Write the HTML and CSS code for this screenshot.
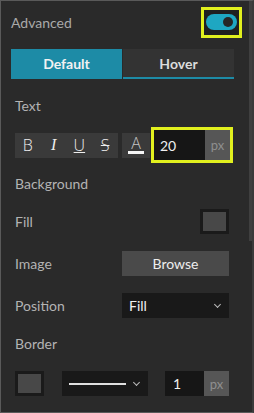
FILE: index.html
```html
<!DOCTYPE html>
<html lang="en">
<head>
    <meta charset="UTF-8">
    <meta name="viewport" content="width=device-width, initial-scale=1.0">
    <title>Advanced Style</title>
    <link rel="stylesheet" href="styles.css">
</head>
<body>
    <div class="panel">
        <div class="scroll-thumb"></div>

        <div class="header">
            <span class="header-title">Advanced</span>
            <div class="highlight toggle-box">
                <div class="toggle"><span class="knob"></span></div>
            </div>
        </div>

        <div class="tabs">
            <button class="tab active">Default</button>
            <button class="tab">Hover</button>
        </div>

        <div class="section">
            <div class="label">Text</div>
            <div class="text-row">
                <div class="format-group">
                    <span class="fmt fmt-b">B</span>
                    <span class="fmt fmt-i">I</span>
                    <span class="fmt fmt-u">U</span>
                    <span class="fmt fmt-s">S</span>
                </div>
                <div class="color-btn"><span class="color-a">A</span><span class="color-bar"></span></div>
                <div class="highlight size-box">
                    <span class="num-input">20</span>
                    <span class="unit">px</span>
                </div>
            </div>

            <div class="label label-bg">Background</div>
            <div class="row">
                <span class="row-label">Fill</span>
                <div class="swatch"><span></span></div>
            </div>
            <div class="row">
                <span class="row-label">Image</span>
                <div class="browse">Browse</div>
            </div>
            <div class="row">
                <span class="row-label">Position</span>
                <div class="select">Fill<span class="chevron"></span></div>
            </div>

            <div class="label label-border">Border</div>
            <div class="border-row">
                <div class="swatch"><span></span></div>
                <div class="line-select"><span class="line"></span><span class="chevron"></span></div>
                <div class="border-size">
                    <span class="num-input">1</span>
                    <span class="unit">px</span>
                </div>
            </div>
        </div>
    </div>
</body>
</html>
```

FILE: styles.css
```css
* {
    box-sizing: border-box;
    margin: 0;
    padding: 0;
}

body {
    background: #2a2a2a;
    font-family: 'Lato', 'Open Sans', sans-serif;
    font-size: 14px;
    color: #b3b3b3;
}

.panel {
    position: relative;
    width: 254px;
    height: 413px;
    border: 1px solid #5a5a5a;
    border-right: 2px solid #3a3a3a;
    background: #2a2a2a;
    overflow: hidden;
    padding-top: 5px;
}

.scroll-thumb {
    position: absolute;
    right: 0;
    top: 0;
    width: 3px;
    height: 240px;
    background: #3f3f3f;
}

.header {
    display: flex;
    align-items: center;
    justify-content: space-between;
    height: 32px;
    padding-left: 10px;
    padding-right: 10px;
}

.header-title {
    font-size: 14px;
    color: #a9a9a9;
}

.highlight {
    border: 3px solid #e1f01e;
}

.toggle-box {
    width: 41px;
    height: 31px;
    display: flex;
    align-items: center;
    justify-content: center;
    background: #202020;
}

.toggle {
    position: relative;
    width: 31px;
    height: 16px;
    border-radius: 8px;
    background: #1ea7c2;
}

.knob {
    position: absolute;
    right: 4px;
    top: 3px;
    width: 10px;
    height: 10px;
    border-radius: 50%;
    background: #262626;
}

.tabs {
    display: flex;
    margin: 11px 18px 0 10px;
    height: 30px;
}

.tab {
    flex: 1;
    border: none;
    font-family: inherit;
    font-size: 14px;
    font-weight: 700;
    background: #333;
    color: #dcdcdc;
    border-bottom: 2px solid #1d8ba6;
}

.tab.active {
    background: #1d8ba6;
    color: #f2f2f2;
    margin-right: 1px;
}

.section {
    padding: 0 23px 0 14px;
}

.label {
    margin-top: 19px;
    height: 16px;
    line-height: 16px;
}

.text-row {
    display: flex;
    align-items: center;
    margin-top: 13px;
    height: 36px;
}

.text-row > div {
    flex-shrink: 0;
}

.format-group {
    display: flex;
    width: 103px;
    height: 25px;
    background: #3a3a3a;
}

.fmt {
    flex: 1;
    display: flex;
    align-items: center;
    justify-content: center;
    font-family: 'Open Sans', sans-serif;
    font-weight: 300;
    font-size: 16px;
    color: #ededed;
}

.fmt-i {
    font-family: 'Liberation Serif', serif;
    font-weight: 400;
    font-style: italic;
    font-size: 16px;
}

.fmt-u {
    text-decoration: underline;
    text-decoration-thickness: 1px;
    text-underline-offset: 1px;
}

.fmt-s {
    text-decoration: line-through;
    text-decoration-thickness: 1px;
}

.color-btn {
    display: flex;
    flex-direction: column;
    align-items: center;
    justify-content: center;
    width: 28px;
    height: 25px;
    margin-left: 4px;
    background: #3a3a3a;
}

.color-a {
    font-family: 'Open Sans', sans-serif;
    font-weight: 300;
    font-size: 16px;
    line-height: 14px;
    color: #c4c4c4;
}

.color-bar {
    width: 16px;
    height: 3px;
    margin-top: 1px;
    background: #f5f5f5;
}

.size-box {
    display: flex;
    width: 82px;
    height: 36px;
    margin-left: 1px;
}

.num-input {
    flex: 1;
    display: flex;
    align-items: center;
    padding-left: 6px;
    background: #161616;
    color: #f0f0f0;
    font-size: 14px;
}

.unit {
    display: flex;
    align-items: center;
    justify-content: center;
    width: 25px;
    background: #565656;
    color: #8f8f8f;
    font-size: 13px;
}

.label-bg {
    margin-top: 13px;
}

.row {
    display: flex;
    align-items: center;
    justify-content: space-between;
    margin-top: 17px;
    height: 25px;
}

.swatch {
    width: 29px;
    height: 25px;
    padding: 3px;
    background: #1a1a1a;
}

.swatch span {
    display: block;
    width: 100%;
    height: 100%;
    background: #484848;
}

.browse {
    width: 107px;
    height: 25px;
    line-height: 25px;
    text-align: center;
    background: #4a4a4a;
    color: #eeeeee;
}

.select {
    position: relative;
    width: 107px;
    height: 25px;
    line-height: 25px;
    padding-left: 7px;
    background: #191919;
    color: #f0f0f0;
}

.chevron {
    position: absolute;
    right: 9px;
    top: 9px;
    width: 5px;
    height: 5px;
    border-right: 1px solid #bbb;
    border-bottom: 1px solid #bbb;
    transform: rotate(45deg);
}

.label-border {
    margin-top: 18px;
}

.border-row {
    display: flex;
    align-items: center;
    margin-top: 19px;
    height: 25px;
}

.line-select {
    position: relative;
    width: 86px;
    height: 25px;
    margin-left: 18px;
    background: #191919;
}

.line {
    position: absolute;
    left: 7px;
    top: 12px;
    width: 57px;
    height: 2px;
    background: #e0e0e0;
}

.border-size {
    display: flex;
    width: 64px;
    height: 25px;
    margin-left: auto;
}

.border-size .num-input {
    padding-left: 8px;
}
```
